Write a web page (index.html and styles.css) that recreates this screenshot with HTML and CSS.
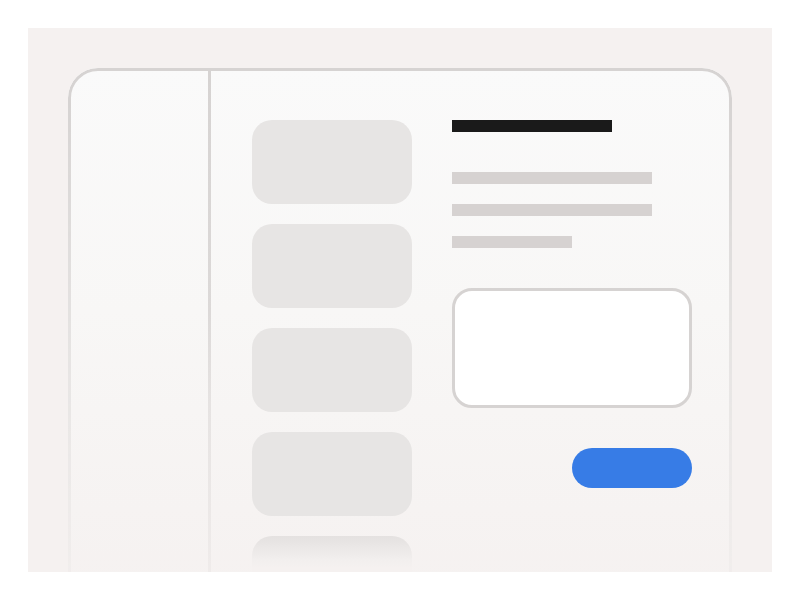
FILE: index.html
```html
<!DOCTYPE html>
<html lang="en">
<head>
<meta charset="utf-8">
<title>Layout</title>
<link rel="stylesheet" href="styles.css">
</head>
<body>
<div class="stage">
  <div class="frame">
    <aside class="sidebar"></aside>
    <div class="divider"></div>
    <main class="main">
      <div class="list">
        <div class="item"></div>
        <div class="item"></div>
        <div class="item"></div>
        <div class="item"></div>
        <div class="item item-ghost"></div>
      </div>
      <section class="detail">
        <div class="title"></div>
        <div class="line line-first"></div>
        <div class="line"></div>
        <div class="line line-short"></div>
        <div class="box"></div>
        <div class="btn"></div>
      </section>
    </main>
  </div>
</div>
</body>
</html>
```

FILE: styles.css
```css
html, body {
  margin: 0;
  background: #ffffff;
}

.stage {
  margin: 28px;
  height: 544px;
  box-sizing: border-box;
  padding: 40px 40px 0;
  background: #f5f1f0;
  overflow: hidden;
}

.frame {
  position: relative;
  height: 540px;
  box-sizing: border-box;
  padding: 3px 3px 0;
  border-radius: 30px 30px 0 0;
  background: linear-gradient(to bottom, #fafafa 0%, #f8f7f6 45%, #f5f1f0 100%);
  display: flex;
}

.frame::before {
  content: "";
  position: absolute;
  left: 0;
  right: 0;
  top: 0;
  bottom: -40px;
  border: 3px solid #d6d3d2;
  border-radius: 30px;
  -webkit-mask-image: linear-gradient(to bottom, #000 6%, rgba(0,0,0,0.45) 55%, rgba(0,0,0,0.05) 95%);
  mask-image: linear-gradient(to bottom, #000 6%, rgba(0,0,0,0.45) 55%, rgba(0,0,0,0.05) 95%);
  pointer-events: none;
}

.sidebar {
  width: 137px;
  flex: none;
}

.divider {
  width: 3px;
  flex: none;
  background: linear-gradient(to bottom, #d6d3d2 0%, #dcd9d8 45%, #e6e3e2 62%, #f1edec 100%);
}

.main {
  flex: 1;
  display: flex;
  gap: 40px;
  padding: 49px 37px 0 41px;
}

.list {
  width: 160px;
  flex: none;
  display: flex;
  flex-direction: column;
  gap: 20px;
}

.item {
  height: 84px;
  flex: none;
  border-radius: 20px;
  background: #e7e5e4;
}

.item-ghost {
  background: linear-gradient(to bottom, #e4e1e0 0px, #ebe8e7 12px, #f2efee 24px, #f5f1f0 32px);
}

.detail {
  width: 240px;
  flex: none;
  display: flex;
  flex-direction: column;
}

.title {
  width: 160px;
  height: 12px;
  background: #1a1a1a;
}

.line {
  width: 200px;
  height: 12px;
  margin-top: 20px;
  background: #d6d2d1;
}

.line-first {
  margin-top: 40px;
}

.line-short {
  width: 120px;
}

.box {
  margin-top: 40px;
  height: 120px;
  box-sizing: border-box;
  border: 3px solid #d6d3d2;
  border-radius: 20px;
  background: #ffffff;
}

.btn {
  margin-top: 40px;
  align-self: flex-end;
  width: 120px;
  height: 40px;
  border-radius: 20px;
  background: #377ce6;
}
```
